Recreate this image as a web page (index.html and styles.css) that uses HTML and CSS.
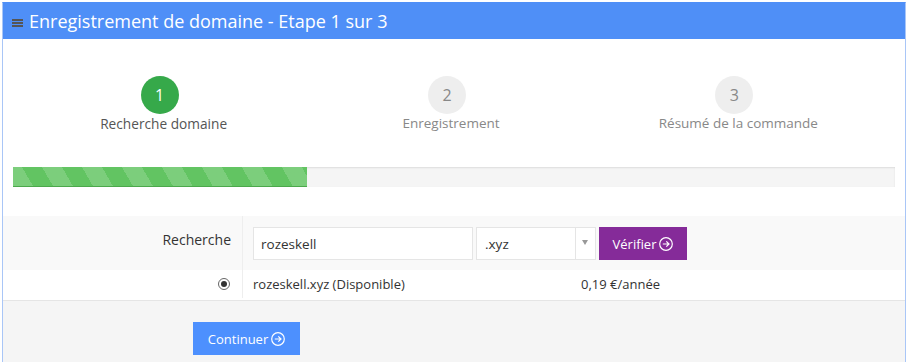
FILE: index.html
```html
<!DOCTYPE html>
<html lang="fr">
<head>
  <meta charset="UTF-8" />
  <title>Enregistrement de domaine</title>
  <link rel="stylesheet" href="styles.css">
</head>
<body>
  <div class="panel">
    <div class="panel-heading">
      <svg class="menu-icon" width="11" height="8" viewBox="0 0 11 8">
        <rect x="0" y="0" width="11" height="2" fill="#555"/>
        <rect x="0" y="3" width="11" height="2" fill="#555"/>
        <rect x="0" y="6" width="11" height="2" fill="#555"/>
      </svg>
      <span class="title">Enregistrement de domaine - Etape 1 sur 3</span>
    </div>

    <div class="steps">
      <div class="step active">
        <div class="circle">1</div>
        <div class="label">Recherche domaine</div>
      </div>
      <div class="step">
        <div class="circle">2</div>
        <div class="label">Enregistrement</div>
      </div>
      <div class="step">
        <div class="circle">3</div>
        <div class="label">Résumé de la commande</div>
      </div>
    </div>

    <div class="progress">
      <div class="progress-bar" style="width: 33.33%"></div>
    </div>

    <div class="form">
      <div class="row search-row">
        <div class="col-label">Recherche</div>
        <div class="col-field">
          <input class="input" type="text" value="rozeskell">
          <div class="select">
            <span>.xyz</span>
            <span class="caret"></span>
          </div>
          <button class="btn btn-purple">Vérifier
            <svg class="arrow" width="14" height="14" viewBox="0 0 14 14">
              <circle cx="7" cy="7" r="6.3" fill="none" stroke="#fff" stroke-width="1.2"/>
              <path d="M3.8 7 H10 M7.3 4.3 L10 7 L7.3 9.7" fill="none" stroke="#fff" stroke-width="1.2"/>
            </svg>
          </button>
        </div>
      </div>
      <div class="row result-row">
        <div class="col-label"><span class="radio"></span></div>
        <div class="col-field">
          <span class="domain">rozeskell.xyz (Disponible)</span>
          <span class="price">0,19 €/année</span>
        </div>
      </div>
    </div>

    <div class="footer">
      <button class="btn btn-blue">Continuer
        <svg class="arrow" width="14" height="14" viewBox="0 0 14 14">
          <circle cx="7" cy="7" r="6.3" fill="none" stroke="#fff" stroke-width="1.2"/>
          <path d="M3.8 7 H10 M7.3 4.3 L10 7 L7.3 9.7" fill="none" stroke="#fff" stroke-width="1.2"/>
        </svg>
      </button>
    </div>
  </div>
</body>
</html>
```

FILE: styles.css
```css
body {
  margin: 0;
  font-family: "Open Sans", sans-serif;
  font-size: 14px;
  color: #333;
  background: #fff;
}
.panel {
  margin: 2px 0 0 2px;
  width: 902px;
  height: 360px;
  border: 1px solid #a9c6f7;
  border-top-color: #4f8ff7;
  border-bottom: none;
  display: flex;
  flex-direction: column;
}
.panel-heading {
  background: #4f8ff7;
  color: #fff;
  height: 36px;
  display: flex;
  align-items: center;
  padding: 0 9px;
}
.menu-icon {
  margin-right: 6px;
  margin-top: 3px;
}
.title {
  font-size: 18px;
}
.steps {
  display: grid;
  grid-template-columns: repeat(3, 1fr);
  padding: 37px 27px 0 13px;
  height: 91px;
}
.step {
  display: flex;
  flex-direction: column;
  align-items: center;
}
.circle {
  width: 38px;
  height: 38px;
  border-radius: 50%;
  background: #eee;
  color: #888;
  font-size: 16px;
  display: flex;
  align-items: center;
  justify-content: center;
}
.step .label {
  color: #888;
  font-size: 13.5px;
  padding-left: 8px;
}
.step.active .circle {
  background: #36a94a;
  color: #fff;
}
.step.active .label {
  color: #555;
  font-size: 13.7px;
}
.progress {
  margin: 0 10px;
  height: 20px;
  background: #f5f5f5;
  box-shadow: inset 0 1px 2px rgba(0, 0, 0, 0.1);
}
.progress-bar {
  height: 100%;
  background-color: #62c462;
  background-image: repeating-linear-gradient(60deg, rgba(255, 255, 255, 0.17) 0, rgba(255, 255, 255, 0.17) 17.3px, transparent 17.3px, transparent 34.6px);
  border-bottom: 1px solid #4ca84c;
  box-sizing: border-box;
}
.form {
  margin-top: 29px;
}
.row {
  display: flex;
}
.search-row {
  background: #f9f9f9;
  height: 54px;
}
.result-row {
  height: 28px;
  font-size: 13px;
}
.col-label {
  width: 240px;
  box-sizing: border-box;
  padding-right: 11px;
  text-align: right;
  border-right: 1px solid #eee;
}
.search-row .col-label {
  padding-top: 14px;
}
.col-field {
  display: flex;
  align-items: center;
  padding-left: 10px;
}
.search-row .col-field {
  align-items: flex-start;
  padding-top: 11px;
}
.input {
  width: 220px;
  height: 33px;
  box-sizing: border-box;
  border: 1px solid #e5e5e5;
  padding: 0 7px;
  font-family: "Open Sans", sans-serif;
  font-size: 13.5px;
  color: #333;
  background: #fff;
}
.select {
  width: 120px;
  height: 33px;
  box-sizing: border-box;
  margin-left: 3px;
  border: 1px solid #e5e5e5;
  background: #fff;
  display: flex;
  align-items: center;
  padding-left: 8px;
  font-size: 13.5px;
  position: relative;
}
.caret {
  position: absolute;
  right: 0;
  top: 0;
  width: 19px;
  height: 31px;
  border-left: 1px solid #e5e5e5;
}
.caret::after {
  content: "";
  position: absolute;
  left: 6px;
  top: 12px;
  border-left: 3px solid transparent;
  border-right: 3px solid transparent;
  border-top: 5px solid #999;
}
.btn {
  border: none;
  color: #fff;
  font-family: "Open Sans", sans-serif;
  font-size: 13px;
  height: 33px;
  padding: 0;
  white-space: nowrap;
  display: flex;
  align-items: center;
  justify-content: center;
  gap: 3px;
}
.arrow {
  display: block;
}
.btn-purple {
  background: #852b99;
  margin-left: 3px;
  width: 88px;
}
.btn-blue {
  background: #4d90fe;
  width: 107px;
}
.radio {
  display: inline-block;
  width: 10px;
  height: 10px;
  border: 1px solid #666;
  border-radius: 50%;
  margin-top: 8px;
  margin-right: 1px;
  position: relative;
  background: #fff;
}
.radio::after {
  content: "";
  position: absolute;
  left: 2px;
  top: 2px;
  width: 6px;
  height: 6px;
  border-radius: 50%;
  background: #333;
}
.domain {
  width: 328px;
}
.footer {
  margin-top: 2px;
  border-top: 1px solid #e5e5e5;
  background: #f5f5f5;
  flex: 1;
  padding: 21px 0 0 190px;
}
```
